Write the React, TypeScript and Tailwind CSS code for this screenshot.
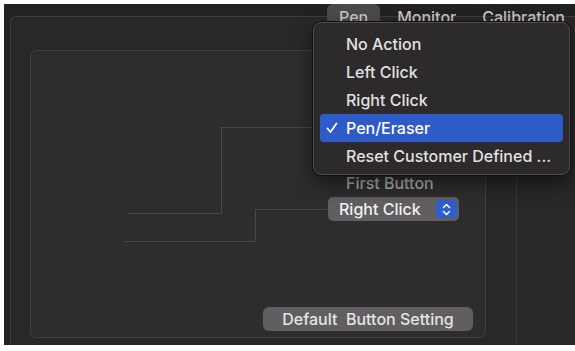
import React from "react";

const menuItems = [
  "No Action",
  "Left Click",
  "Right Click",
  "Pen/Eraser",
  "Reset Customer Defined ...",
];

function Check() {
  return (
    <svg width="12" height="12" viewBox="0 0 12 12" fill="none">
      <path
        d="M1.5 6.5 L4.5 10 L10.5 1.5"
        stroke="#ffffff"
        strokeWidth="1.8"
        strokeLinecap="round"
        strokeLinejoin="round"
      />
    </svg>
  );
}

function Stepper() {
  return (
    <div className="flex h-[18px] w-[21px] items-center justify-center rounded-[4px] bg-[#2f5ecf]">
      <svg width="9" height="13" viewBox="0 0 9 13" fill="none">
        <path
          d="M1.5 4.5 L4.5 1.5 L7.5 4.5 M1.5 8.5 L4.5 11.5 L7.5 8.5"
          stroke="#ffffff"
          strokeWidth="1.5"
          strokeLinecap="round"
          strokeLinejoin="round"
        />
      </svg>
    </div>
  );
}

export default function App() {
  return (
    <div className="h-[351px] w-[575px] overflow-hidden bg-white pb-[6px] pl-1 pt-1 font-['Inter','Noto_Sans',sans-serif]">
      <div className="relative h-full bg-[#232122] pl-[6px] pt-[12px]">
        {/* outer tab panel */}
        <div className="flex h-full rounded-tl-md border-l border-t border-[#3d3b3c] bg-[#292728] pl-[19px] pt-[33px]">
          <div className="relative flex h-[288px] w-[456px] shrink-0 flex-col items-end justify-end rounded-md border border-[#423f41] bg-[#2e2c2d] pb-[6px] pr-[12px]">
            <svg
              className="absolute left-0 top-0"
              width="454"
              height="286"
              viewBox="0 0 454 286"
              fill="none"
            >
              <path
                d="M290 76.5 H190.5 V162.5 H97 M296 158.5 H224.5 V190.5 H94"
                stroke="#4a4749"
                strokeWidth="1"
              />
            </svg>

            <div className="absolute left-[297px] top-[123px] flex flex-col gap-[5px]">
              <span className="pl-[18px] text-[16px] font-medium leading-[18px] text-[#a9a7a8]">
                First Button
              </span>
              <div className="flex h-[24px] w-[131px] items-center justify-between rounded-[5px] bg-[#605e60] pl-[11px] pr-[2px]">
                <span className="text-[16px] font-medium text-[#f0f0f0]">
                  Right Click
                </span>
                <Stepper />
              </div>
            </div>

            <button className="relative flex h-[24px] w-[210px] items-center justify-center whitespace-pre rounded-md bg-[#605e60] text-[16px] font-medium text-[#e4e4e4]">
              Default  Button Setting
            </button>
          </div>
          <div className="ml-[30px] h-full border-l border-[#3a3839]" />
        </div>

        {/* tabs */}
        <div className="absolute left-[323px] top-0 flex h-[22px] text-[16px] font-medium leading-[22px] text-[#c6c4c5]">
          <div className="rounded-t-md bg-[#4b494a] px-[12px] pt-[2px]">Pen</div>
          <div className="px-[17px] pt-[2px]">Monitor</div>
          <div className="pl-[9px] pt-[2px]">Calibration</div>
        </div>

        {/* popup menu */}
        <div className="absolute left-[309px] top-[18px] w-[257px] rounded-lg border border-[#4d4b4c] bg-[#2c2a2b] px-[6px] pb-[4px] pt-[7px] shadow-[0_0_0_1px_#111,0_8px_20px_rgba(0,0,0,0.5)]">
          {menuItems.map((item) => {
            const selected = item === "Pen/Eraser";
            return (
              <div
                key={item}
                className={
                  selected
                    ? "flex h-[28px] items-center rounded-[4px] bg-[#2f5bc8] pl-[6px] text-[16px] font-medium text-white"
                    : "flex h-[28px] items-center rounded-[4px] pl-[6px] text-[16px] font-medium text-[#e2e0e1]"
                }
              >
                <span className="flex w-[20px] items-center">
                  {selected && <Check />}
                </span>
                <span>{item}</span>
              </div>
            );
          })}
        </div>
      </div>
    </div>
  );
}
